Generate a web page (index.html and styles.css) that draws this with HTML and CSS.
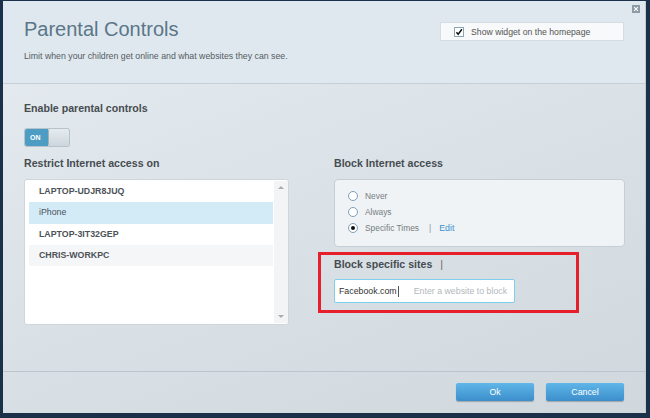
FILE: index.html
```html
<!DOCTYPE html>
<html>
<head>
<meta charset="utf-8">
<link rel="stylesheet" href="styles.css">
</head>
<body>
<div class="dialog">
  <button class="close" aria-label="Close">
    <svg width="8" height="8" viewBox="0 0 8 8"><path d="M1.5 1.5 L6.5 6.5 M6.5 1.5 L1.5 6.5" stroke="#fff" stroke-width="1.4"/></svg>
  </button>
  <header class="head">
    <div class="head-text">
      <h1 class="title">Parental Controls</h1>
      <p class="subtitle">Limit when your children get online and what websites they can see.</p>
    </div>
    <label class="widget">
      <span class="check">
        <svg width="10" height="10" viewBox="0 0 10 10"><path d="M1.8 5.2 L4 7.8 L8.6 1.6" fill="none" stroke="#111" stroke-width="1.8"/></svg>
      </span>
      Show widget on the homepage
    </label>
  </header>
  <main class="content">
    <h2 class="label">Enable parental controls</h2>
    <div class="toggle"><span class="on">ON</span><span class="knob"></span></div>
    <div class="cols">
      <section class="col">
        <h2 class="label">Restrict Internet access on</h2>
        <div class="list">
          <ul class="items">
            <li class="item">LAPTOP-UDJR8JUQ</li>
            <li class="item sel">iPhone</li>
            <li class="item">LAPTOP-3IT32GEP</li>
            <li class="item alt">CHRIS-WORKPC</li>
          </ul>
          <div class="scroll">
            <span class="arr up"></span>
            <span class="arr down"></span>
          </div>
        </div>
      </section>
      <section class="col">
        <h2 class="label">Block Internet access</h2>
        <div class="radios">
          <div class="radio"><span class="dot"></span>Never</div>
          <div class="radio"><span class="dot"></span>Always</div>
          <div class="radio"><span class="dot checked"></span>Specific Times<span class="sep">|</span><a class="edit">Edit</a></div>
        </div>
        <div class="sites">
          <h2 class="label">Block specific sites <span class="bar">|</span></h2>
          <div class="input"><span class="val">Facebook.com</span><span class="caret"></span><span class="ph">Enter a website to block</span></div>
        </div>
      </section>
    </div>
  </main>
  <footer class="foot">
    <button class="btn">Ok</button>
    <button class="btn">Cancel</button>
  </footer>
</div>
</body>
</html>
```
FILE: styles.css
```css
* { box-sizing: border-box; }
html, body { margin: 0; padding: 0; }
body {
  width: 650px;
  height: 418px;
  background: #1b3049;
  font-family: "Liberation Sans", Arial, sans-serif;
  overflow: hidden;
  padding: 1px 4px 5px 3px;
}
.dialog {
  position: relative;
  width: 643px;
  height: 412px;
  display: flex;
  flex-direction: column;
  background: linear-gradient(160deg, #e6ecf0 0%, #dde4e9 40%, #d0d8dd 100%);
  border-right: 1px solid #c3ccd2;
}
.close {
  position: absolute;
  top: 4px;
  right: 5px;
  width: 8px;
  height: 8px;
  padding: 0;
  border: 0;
  background: #8d9ba6;
  display: flex;
  align-items: center;
  justify-content: center;
}
.close svg { width: 6px; height: 6px; }
.head {
  height: 83px;
  flex: none;
  background: #dfe8ef;
  border-bottom: 1px solid #c4cfd7;
  display: flex;
  justify-content: space-between;
  align-items: flex-start;
  padding: 17px 21px 0 21px;
}
.title {
  margin: 0;
  font-weight: normal;
  font-size: 20px;
  line-height: 22px;
  color: #5a7688;
}
.subtitle {
  margin: 11px 0 0 0;
  font-size: 8.75px;
  line-height: 11px;
  color: #545b60;
}
.widget {
  margin-top: 4px;
  width: 184px;
  height: 19px;
  background: #f7f9fa;
  border: 1px solid #d4dde3;
  display: flex;
  align-items: center;
  padding-left: 13px;
  gap: 7px;
  font-size: 8.7px;
  color: #555;
}
.check {
  width: 10px;
  height: 10px;
  border: 1px solid #8aa5b8;
  background: #fff;
  display: flex;
  align-items: center;
  justify-content: center;
}
.content {
  flex: 1;
  padding: 18px 0 0 21px;
}
.label {
  margin: 0;
  font-size: 10.6px;
  line-height: 13px;
  font-weight: bold;
  color: #464c51;
}
.toggle {
  margin: 14px 0 0 1px;
  width: 44px;
  height: 17px;
  display: flex;
  border-radius: 2px;
  overflow: hidden;
  box-shadow: 0 0 0 1px #b7c3cb;
}
.on {
  width: 23px;
  background: #4d9cc3;
  color: #fff;
  font-size: 7px;
  font-weight: bold;
  display: flex;
  align-items: center;
  padding-left: 5px;
}
.knob {
  flex: 1;
  background: linear-gradient(#e6ecf0, #ccd6dc);
  border-left: 1px solid #9fb0bb;
  border-radius: 2px;
}
.cols {
  margin-top: 11px;
  display: grid;
  grid-template-columns: 265px 291px;
  column-gap: 45px;
}
.list {
  margin-top: 9px;
  height: 146px;
  background: #fff;
  border: 1px solid #cfd6db;
  border-radius: 3px;
  display: flex;
  padding: 1px 0 1px 4px;
}
.items {
  list-style: none;
  margin: 0;
  padding: 0;
  flex: 1;
}
.item {
  height: 21.3px;
  line-height: 21.3px;
  padding-left: 10px;
  font-size: 8.8px;
  font-weight: bold;
  color: #4c5257;
}
.item.sel { background: #d2ebf7; font-weight: normal; }
.item.alt { background: #f5f6f7; }
.scroll {
  width: 14px;
  margin-left: 1px;
  background: #f3f4f5;
  display: flex;
  flex-direction: column;
  justify-content: space-between;
  align-items: center;
  padding: 5px 0 5px;
}
.arr {
  width: 0;
  height: 0;
  border-left: 3px solid transparent;
  border-right: 3px solid transparent;
}
.arr.up { border-bottom: 3px solid #a8adb1; }
.arr.down { border-top: 3px solid #a8adb1; }
.radios {
  margin-top: 9px;
  height: 68px;
  background: #eff3f6;
  border: 1px solid #c6cfd5;
  border-radius: 4px;
  padding: 8px 0 0 13px;
}
.radio {
  height: 16px;
  display: flex;
  align-items: center;
  font-size: 8.4px;
  color: #777c80;
}
.dot {
  width: 10px;
  height: 10px;
  border-radius: 50%;
  border: 1px solid #7c9fb6;
  background: #fff;
  margin-right: 7px;
  position: relative;
}
.dot.checked::after {
  content: "";
  position: absolute;
  left: 2px;
  top: 2px;
  width: 4px;
  height: 4px;
  border-radius: 50%;
  background: #111;
}
.sep { margin: 0 8px 0 10px; color: #8a9096; }
.edit { color: #3d8fcf; font-size: 8.8px; }
.sites {
  margin: 5px 46px 0 -16px;
  border: 3px solid #e5202a;
  height: 61px;
  padding: 3px 0 0 13px;
}
.bar { font-weight: normal; color: #666; margin-left: 5px; }
.input {
  margin-top: 8px;
  width: 181px;
  height: 24px;
  background: #fff;
  border: 1px solid #7dcfeb;
  border-radius: 2px;
  display: flex;
  align-items: center;
  padding-left: 4px;
  font-size: 8.8px;
}
.val { color: #333; }
.caret { width: 1px; height: 11px; background: #555; margin-left: 1px; }
.ph { color: #b3b8bc; margin-left: 15px; }
.foot {
  height: 42px;
  flex: none;
  border-top: 1px solid #bcc5cb;
  display: flex;
  justify-content: flex-end;
  align-items: flex-start;
  gap: 12px;
  padding: 11px 21px 0 0;
}
.btn {
  width: 78px;
  height: 18px;
  border: 0;
  border-radius: 2px;
  background: linear-gradient(#5fb6e8, #3c8ecb);
  box-shadow: 0 1px 1px rgba(0,0,0,0.25);
  color: #fff;
  font-family: "Liberation Sans", Arial, sans-serif;
  font-size: 8.8px;
}
```
